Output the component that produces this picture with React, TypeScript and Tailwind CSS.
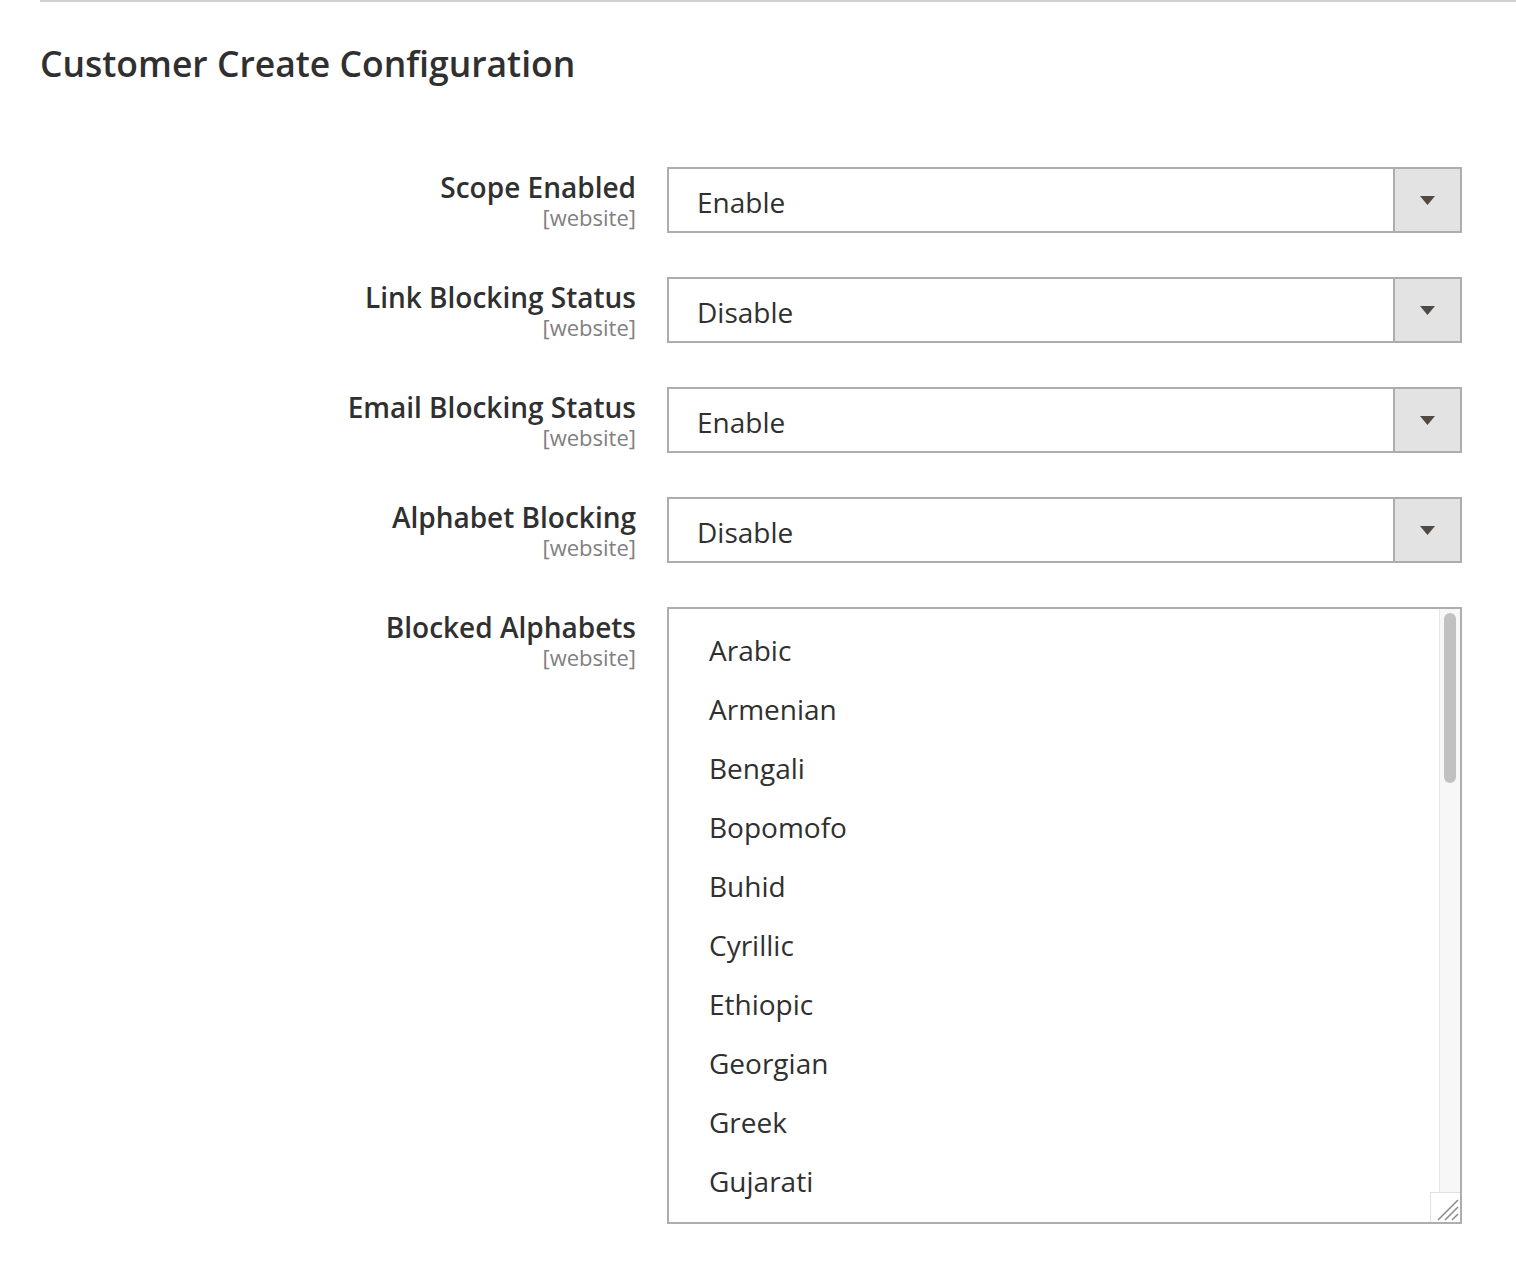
import React from 'react';

interface SelectFieldProps {
    label: string;
    value: string;
}

const scopeTag = '[website]';

const alphabets = [
    'Arabic', 'Armenian', 'Bengali', 'Bopomofo', 'Buhid', 'Cyrillic', 'Ethiopic', 'Georgian',
    'Greek', 'Gujarati', 'Gurmukhi', 'Han',
];

const FieldLabel: React.FC<{ label: string }> = ({ label }) => (
    <div className="w-[596px] shrink-0 pt-[4px] text-right">
        <div className="text-[28px] leading-[32px] font-semibold text-[#303030]">{label}</div>
        <div className="text-[22px] leading-[28px] text-[#808080]">{scopeTag}</div>
    </div>
);

const SelectField: React.FC<SelectFieldProps> = ({ label, value }) => (
    <div className="flex gap-[31px]">
        <FieldLabel label={label} />
        <div className="flex h-[66px] w-[795px] border-2 border-[#adadad] bg-white">
            <div className="flex flex-1 items-center pt-[4px] pl-[28px] text-[28px] text-[#303030]">{value}</div>
            <div className="flex w-[67px] items-center justify-center border-l-2 border-[#adadad] bg-[#e3e3e3]">
                <svg width="15" height="9" viewBox="0 0 15 9">
                    <path d="M0 0 L15 0 L7.5 9 Z" fill="#514943" />
                </svg>
            </div>
        </div>
    </div>
);

const App: React.FC = () => {
    return (
        <div className="min-h-[1286px] bg-white pl-[40px] font-['Open_Sans',sans-serif]">
            <div className="h-[2px] bg-[#d1d1d1]" />

            <h2 className="mt-[40px] text-[35.5px] leading-[42px] font-semibold text-[#303030]">
                Customer Create Configuration
            </h2>

            <div className="mt-[83px] flex flex-col gap-[44px]">
                <SelectField label="Scope Enabled" value="Enable" />
                <SelectField label="Link Blocking Status" value="Disable" />
                <SelectField label="Email Blocking Status" value="Enable" />
                <SelectField label="Alphabet Blocking" value="Disable" />

                <div className="flex gap-[31px]">
                    <FieldLabel label="Blocked Alphabets" />
                    <div className="relative h-[617px] w-[795px] overflow-hidden border-2 border-[#adadad] bg-white">
                        <ul className="pt-[12px] pl-[40px]">
                            {alphabets.map((name) => (
                                <li key={name} className="h-[59px] text-[28px] leading-[59px] text-[#303030]">
                                    {name}
                                </li>
                            ))}
                        </ul>

                        {/* fake scrollbar */}
                        <div className="absolute top-0 right-0 bottom-0 w-[21px] border-l border-[#e8e8e8] bg-[#f7f7f7]">
                            <div className="mx-auto mt-[4px] h-[170px] w-[12px] rounded-full bg-[#c1c1c1]" />
                        </div>
                        <div className="absolute right-0 bottom-0 flex h-[30px] w-[30px] items-end justify-end border-t border-l border-[#e0e0e0] bg-white">
                            <svg width="26" height="26" viewBox="0 0 26 26">
                                <path d="M4 24 L24 4 M11 24 L24 11 M18 24 L24 18" stroke="#8a8a8a" strokeWidth="1.5" />
                            </svg>
                        </div>
                    </div>
                </div>
            </div>
        </div>
    );
};

export default App;
